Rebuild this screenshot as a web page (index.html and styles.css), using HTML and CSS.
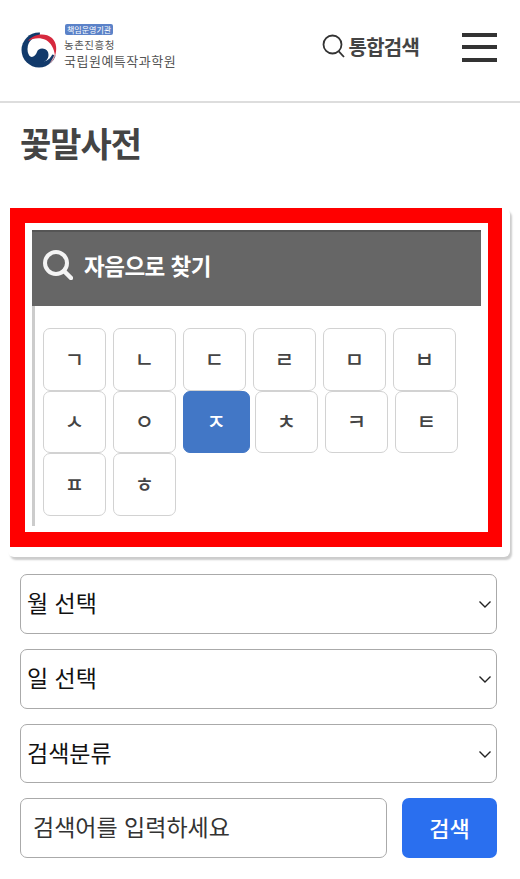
FILE: index.html
```html
<!DOCTYPE html>
<html lang="ko">
<head>
    <meta charset="UTF-8">
    <meta name="viewport" content="width=device-width, initial-scale=1.0">
    <title>꽃말사전</title>
    <link rel="stylesheet" href="styles.css">
</head>
<body>

    <header class="site-header">
        <a class="logo" href="#">
            <svg class="logo-mark" width="36" height="36" viewBox="0 0 36 36">
                <circle cx="18" cy="18" r="17.500" fill="#123a6b"/>
                <path d="M19 0H36V24L18 18z" fill="#fff"/>
                <circle cx="19.500" cy="17" r="13" fill="#fff"/>
                <path d="M6 20C8 27 14 26 16 20C17 16 24 15 27 20C29 26 25 31 18 31C12 31 8 26 6 20z" fill="#123a6b"/>
                <path d="M7 9C12 2 24 0 31 6C36 11 36 18 34 24C33 16 30 11 25 8C19 5 12 6 7 9z" fill="#d6293e"/>
                <path d="M34 24C33 27 31 30 28 32C30 29 32 27 33.500 22z" fill="#f0a9ae"/>
            </svg>
            <div class="logo-text">
                <span class="logo-badge">책임운영기관</span>
                <span class="logo-org">농촌진흥청</span>
                <span class="logo-name">국립원예특작과학원</span>
            </div>
        </a>
        <a class="total-search" href="#">
            <svg width="23" height="24" viewBox="0 0 23 24">
                <circle cx="10.500" cy="10.500" r="9" fill="none" stroke="#333" stroke-width="1.800"/>
                <path d="M16.800 17.300L22 23" fill="none" stroke="#333" stroke-width="1.800"/>
            </svg>
            <span>통합검색</span>
        </a>
        <button class="menu-button" aria-label="메뉴">
            <span></span><span></span><span></span>
        </button>
    </header>

    <main>
        <h1 class="page-title">꽃말사전</h1>

        <section class="finder-outer">
            <div class="finder-red">
                <div class="finder">
                    <h2 class="finder-head">
                        <svg width="30" height="30" viewBox="0 0 30 30">
                            <circle cx="13" cy="13" r="11" fill="none" stroke="#f4f4f4" stroke-width="4"/>
                            <path d="M21 21l7 7" fill="none" stroke="#f4f4f4" stroke-width="4.500" stroke-linecap="round"/>
                        </svg>
                        <span>자음으로 찾기</span>
                    </h2>
                    <div class="finder-body">
                        <ul class="consonants">
                            <li><a href="#">ㄱ</a></li>
                            <li><a href="#">ㄴ</a></li>
                            <li><a href="#">ㄷ</a></li>
                            <li><a href="#">ㄹ</a></li>
                            <li><a href="#">ㅁ</a></li>
                            <li><a href="#">ㅂ</a></li>
                            <li><a href="#">ㅅ</a></li>
                            <li><a href="#">ㅇ</a></li>
                            <li class="active"><a href="#">ㅈ</a></li>
                            <li><a href="#">ㅊ</a></li>
                            <li><a href="#">ㅋ</a></li>
                            <li><a href="#">ㅌ</a></li>
                            <li><a href="#">ㅍ</a></li>
                            <li><a href="#">ㅎ</a></li>
                        </ul>
                    </div>
                </div>
            </div>
        </section>

        <form class="search-form">
            <div class="select-box">
                <select><option>월 선택</option></select>
                <svg class="chevron" width="12" height="7" viewBox="0 0 12 7"><path d="M.5.5L6 6 11.500.5" fill="none" stroke="#222" stroke-width="1.400"/></svg>
            </div>
            <div class="select-box">
                <select><option>일 선택</option></select>
                <svg class="chevron" width="12" height="7" viewBox="0 0 12 7"><path d="M.5.5L6 6 11.500.5" fill="none" stroke="#222" stroke-width="1.400"/></svg>
            </div>
            <div class="select-box">
                <select><option>검색분류</option></select>
                <svg class="chevron" width="12" height="7" viewBox="0 0 12 7"><path d="M.5.5L6 6 11.500.5" fill="none" stroke="#222" stroke-width="1.400"/></svg>
            </div>
            <div class="keyword-row">
                <input type="text" class="keyword" placeholder="검색어를 입력하세요">
                <button type="button" class="search-button">검색</button>
            </div>
        </form>
    </main>

</body>
</html>
```

FILE: styles.css
```css
* {
    box-sizing: border-box;
}
html, body {
    margin: 0;
    padding: 0;
    height: 879px;
    overflow: hidden;
}
body {
    font-family: "Noto Sans CJK KR", "Noto Sans", sans-serif;
    background-color: #fff;
    color: #333;
}
a {
    color: inherit;
    text-decoration: none;
}

/* header */
.site-header {
    display: flex;
    align-items: center;
    height: 103px;
    padding: 0 23px 7px 20px;
    border-bottom: 2px solid #ddd;
}
.logo {
    display: flex;
    align-items: center;
    margin-right: auto;
}
.logo-mark {
    margin: 6px 7px 0 1px;
}
.logo-text {
    display: flex;
    flex-direction: column;
    align-items: flex-start;
    margin-top: -2px;
    color: #555;
    white-space: nowrap;
}
.logo-badge {
    background-color: #5b82c8;
    color: #fff;
    font-size: 8px;
    line-height: 11px;
    padding: 0 2px;
    border-radius: 2px;
    margin-left: 1px;
}
.logo-org {
    font-size: 10.5px;
    line-height: 15px;
    letter-spacing: 0.5px;
    margin-top: 2px;
}
.logo-name {
    font-size: 13px;
    line-height: 17px;
    letter-spacing: 0.5px;
}
.total-search {
    display: flex;
    align-items: center;
    gap: 4px;
    font-size: 20px;
    font-weight: 700;
    letter-spacing: -0.8px;
    color: #444;
    margin: -2px 43px 0 0;
}
.menu-button {
    display: flex;
    flex-direction: column;
    justify-content: space-between;
    width: 35px;
    height: 29px;
    padding: 0;
    border: none;
    background: none;
}
.menu-button span {
    display: block;
    height: 4px;
    background-color: #333;
}

/* title */
.page-title {
    margin: 17px 0 42px 20px;
    font-size: 34px;
    line-height: 46px;
    font-weight: 700;
    letter-spacing: -1px;
    color: #444;
}

/* consonant finder */
.finder-outer {
    width: 502px;
    height: 349px;
    margin-left: 8px;
    padding: 0 8px 8px 2px;
    border-radius: 6px;
    box-shadow: 2px 3px 2px #ccc;
}
.finder-red {
    height: 339px;
    border: 15px solid #f00;
    border-right-width: 14px;
    padding: 7px;
    background-color: #fff;
}
.finder {
    height: 296px;
}
.finder-head {
    display: flex;
    align-items: center;
    gap: 11px;
    height: 76px;
    margin: 0;
    padding: 0 0 8px 11px;
    background-color: #666;
    border-top: 2px solid #555;
    color: #fff;
    font-size: 22.5px;
    font-weight: 700;
    letter-spacing: -0.5px;
}
.finder-body {
    height: 220px;
    border-left: 3px solid #ccc;
    padding: 22px 0 0 8px;
}
.consonants {
    display: flex;
    flex-wrap: wrap;
    list-style: none;
    margin: 0;
    padding: 0;
}
.consonants li {
    width: 63px;
    height: 62.6px;
    margin-right: 7px;
}
.consonants a {
    display: flex;
    align-items: center;
    justify-content: center;
    height: 100%;
    padding-bottom: 3px;
    border: 1.5px solid #d2d2d2;
    border-radius: 7px;
    font-size: 21px;
    font-weight: 500;
    color: #444;
}
.consonants .active {
    width: 66.5px;
    margin-right: 5.5px;
}
.consonants .active a {
    background-color: #4277c6;
    border-color: #4277c6;
    color: #fff;
}

/* search form */
.search-form {
    display: flex;
    flex-direction: column;
    gap: 15px;
    width: 477px;
    margin: 17px 0 0 20px;
}
.select-box {
    position: relative;
}
.select-box select {
    display: block;
    width: 100%;
    height: 60px;
    padding: 0 30px 4px 6px;
    border: 1.5px solid #aaa;
    border-radius: 7px;
    background-color: #fff;
    appearance: none;
    font-family: inherit;
    font-size: 23px;
    color: #111;
}
.select-box:nth-child(3) select {
    height: 59px;
}
.chevron {
    position: absolute;
    right: 6px;
    top: 27px;
}
.keyword-row {
    display: flex;
    justify-content: space-between;
}
.keyword {
    width: 367px;
    height: 60px;
    padding: 0 12px 4px;
    border: 1.5px solid #aaa;
    border-radius: 7px;
    font-family: inherit;
    font-size: 23px;
}
.keyword::placeholder {
    color: #333;
    opacity: 1;
}
.search-button {
    width: 95px;
    height: 60px;
    padding-bottom: 4px;
    border: none;
    border-radius: 7px;
    background-color: #2a6fef;
    color: #fff;
    font-family: inherit;
    font-size: 22px;
    font-weight: 500;
}
```
